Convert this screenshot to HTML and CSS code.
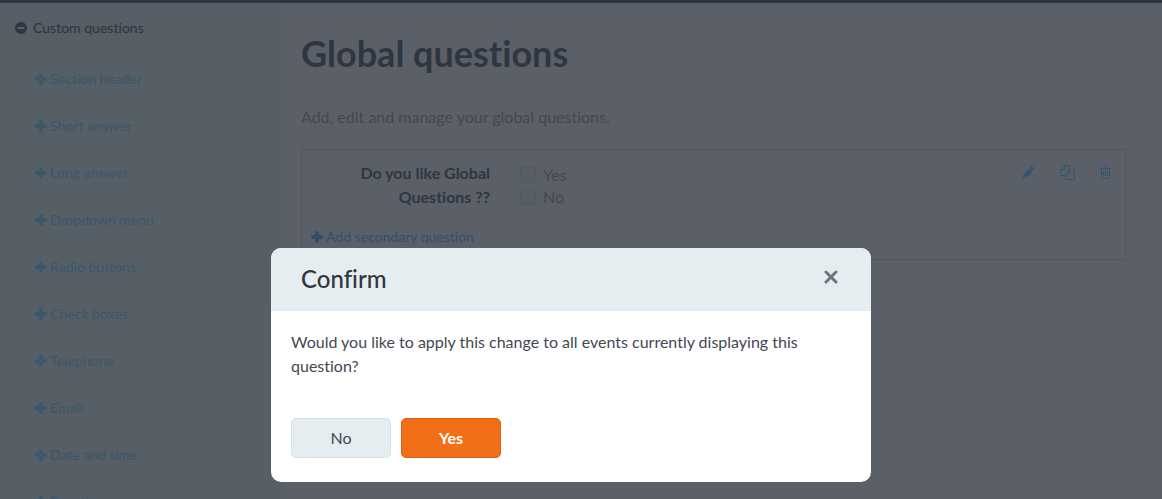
FILE: index.html
```html
<!DOCTYPE html>
<html lang="en">
<head>
<meta charset="utf-8">
<title>Global questions</title>
<link rel="stylesheet" href="styles.css">
</head>
<body>
<svg class="sprite" aria-hidden="true">
  <symbol id="plus" viewBox="0 0 12 12"><path d="M5 .2h2q.9 0 .9.9v3h3q.9 0 .9.900v2q0 .9-.9.900h-3v3q0 .9-.9.900H5q-.9 0-.9-.9v-3h-3Q.2 7.900.2 7V5q0-.9.900-.9h3v-3Q4.100.2 5 .2z"/></symbol>
</svg>
<div class="page">
  <nav class="sidebar">
    <h2 class="group"><svg class="minus" viewBox="0 0 12 12" aria-hidden="true"><path fill-rule="evenodd" d="M6 0a6 6 0 1 1 0 12A6 6 0 0 1 6 0zM3 5q-.5 0-.5.5v1q0 .5.5.5h6q.5 0 .5-.5v-1Q9.500 5 9 5z"/></svg>Custom questions</h2>
    <ul class="types">
      <li><a href="#"><svg class="plus"><use href="#plus"/></svg>Section header</a></li>
      <li><a href="#"><svg class="plus"><use href="#plus"/></svg>Short answer</a></li>
      <li><a href="#"><svg class="plus"><use href="#plus"/></svg>Long answer</a></li>
      <li><a href="#"><svg class="plus"><use href="#plus"/></svg>Dropdown menu</a></li>
      <li><a href="#"><svg class="plus"><use href="#plus"/></svg>Radio buttons</a></li>
      <li><a href="#"><svg class="plus"><use href="#plus"/></svg>Check boxes</a></li>
      <li><a href="#"><svg class="plus"><use href="#plus"/></svg>Telephone</a></li>
      <li><a href="#"><svg class="plus"><use href="#plus"/></svg>Email</a></li>
      <li><a href="#"><svg class="plus"><use href="#plus"/></svg>Date and time</a></li>
      <li><a href="#"><svg class="plus"><use href="#plus"/></svg>Duration</a></li>
    </ul>
  </nav>
  <main class="content">
    <h1>Global questions</h1>
    <p class="intro">Add, edit and manage your global questions.</p>
    <section class="card">
      <div class="question">
        <h3 id="q">Do you like Global Questions ??</h3>
        <div class="options" role="group" aria-labelledby="q">
          <label><input type="checkbox">Yes</label>
          <label><input type="checkbox">No</label>
        </div>
        <div class="tools">
          <button type="button" aria-label="Edit"><svg width="13" height="13" viewBox="0 0 13 13"><path fill-rule="evenodd" d="M.3 12.700l.8-4L7.500 2.300l3.200 3.200-6.400 6.400zM1.700 9.600l-.5 2.200 2.200-.5zM8.200 1.600l1-1q.7-.6 1.300 0l1.900 1.900q.6.700 0 1.300l-1 1z"/></svg></button>
          <button type="button" aria-label="Copy"><svg width="15" height="15" viewBox="0 0 15 15" fill="none" stroke="currentColor"><path d="M5.500 10.500h-5v-6l4-4h4v4M4.500.5v4h-4M5.500 8.500l4-4h5v10h-9zM9.500 4.500v4h-4"/></svg></button>
          <button type="button" aria-label="Delete"><svg width="11" height="13" viewBox="0 0 11 13" fill="none" stroke="currentColor"><path d="M0 2.500h11M3.500 2.500v-1q0-1 1-1h2q1 0 1 1v1M1.500 2.500v9q0 1 1 1h6q1 0 1-1v-9M3.500 5v5M5.500 5v5M7.500 5v5"/></svg></button>
        </div>
      </div>
      <a class="add" href="#"><svg class="plus"><use href="#plus"/></svg>Add secondary question</a>
    </section>
  </main>
</div>
<div class="overlay">
  <div class="modal" role="dialog" aria-modal="true" aria-labelledby="title">
    <header class="modal-head">
      <h2 id="title">Confirm</h2>
      <button class="close" type="button" aria-label="Close"><svg width="14" height="14" viewBox="0 0 14 14"><path d="M2 2l10 10M12 2L2 12" stroke="currentColor" stroke-width="3" stroke-linecap="round"/></svg></button>
    </header>
    <div class="modal-body">
      <p>Would you like to apply this change to all events currently displaying this question?</p>
      <div class="actions">
        <button class="btn" type="button">No</button>
        <button class="btn primary" type="button">Yes</button>
      </div>
    </div>
  </div>
</div>
</body>
</html>
```
FILE: styles.css
```css
* { box-sizing: border-box; }
html, body { height: 100%; }
body {
  margin: 0;
  overflow: hidden;
  background: #5b5f68;
  color: #2f3640;
  font: 16px/24px Lato, "Open Sans", sans-serif;
  font-variant-ligatures: none;
}
h1, h2, h3, p, ul { margin: 0; padding: 0; }
svg { display: block; fill: currentColor; }
svg[fill="none"] { fill: none; }
.sprite { position: absolute; width: 0; height: 0; }
a { color: #3b586a; text-decoration: none; }
button { font: inherit; color: inherit; cursor: pointer; }

.page { display: flex; height: 100%; border-top: 3px solid #2f3540; }
.sidebar {
  flex: none;
  width: 286px;
  padding: 13px 15px 0;
  background: #565e66;
  overflow: hidden;
}
.group { display: flex; align-items: center; gap: 6px; font-size: 14px; font-weight: 500; }
.minus { width: 12px; height: 12px; }
.types { list-style: none; padding: 15px 0 0 20px; }
.types a { display: flex; align-items: center; gap: 3px; height: 47px; font-size: 14px; font-weight: 500; }
.plus { width: 12px; height: 12px; flex: none; }

.content { flex: 1; padding: 26px 36px 0 15px; }
h1 { font-size: 36px; line-height: 48px; font-weight: 700; }
.intro { margin-top: 28px; font-size: 16px; color: #434851; }
.card { margin-top: 20px; padding: 11px 14px 10px 9px; border: 1px solid #52575f; }
.question { display: flex; align-items: flex-start; }
.question h3 { width: 179px; font-size: 16px; font-weight: 700; text-align: right; }
.options { display: grid; flex: 1; padding: 3px 0 0 30px; color: #434851; }
.options label { display: flex; align-items: center; gap: 7px; height: 22px; }
.options input {
  appearance: none;
  width: 16px;
  height: 16px;
  margin: 0;
  border: 1px solid #535861;
  border-radius: 3px;
  background: #585e66;
}
.tools { display: flex; align-items: center; gap: 25px; padding-top: 4px; color: #2d5870; }
.tools button { padding: 0; border: 0; background: none; }
.add { display: flex; align-items: center; gap: 3px; margin-top: 16px; font-size: 14px; color: #2d5268; }

.overlay {
  position: fixed;
  inset: 0;
  display: flex;
  justify-content: center;
  align-items: flex-start;
  padding: 248px 20px 0 0;
}
.modal { width: 100%; max-width: 600px; border-radius: 10px; overflow: hidden; background: #fff; }
.modal-head {
  display: flex;
  align-items: center;
  justify-content: space-between;
  padding: 15px 33px 16px 30px;
  background: #e5edf0;
}
.modal-head h2 { font-size: 24px; line-height: 32px; font-weight: 500; }
.close { padding: 0 0 4px; border: 0; background: none; color: #6b7780; }
.modal-body { padding: 19px 20px 24px; color: #434852; }
.actions { display: flex; gap: 10px; margin-top: 40px; }
.btn {
  width: 100px;
  height: 40px;
  border: 1px solid #d5e1e8;
  border-radius: 5px;
  background: #e5edf0;
}
.btn.primary { border-color: #e06010; background: #f06f18; color: #fff; font-weight: 700; }
```
